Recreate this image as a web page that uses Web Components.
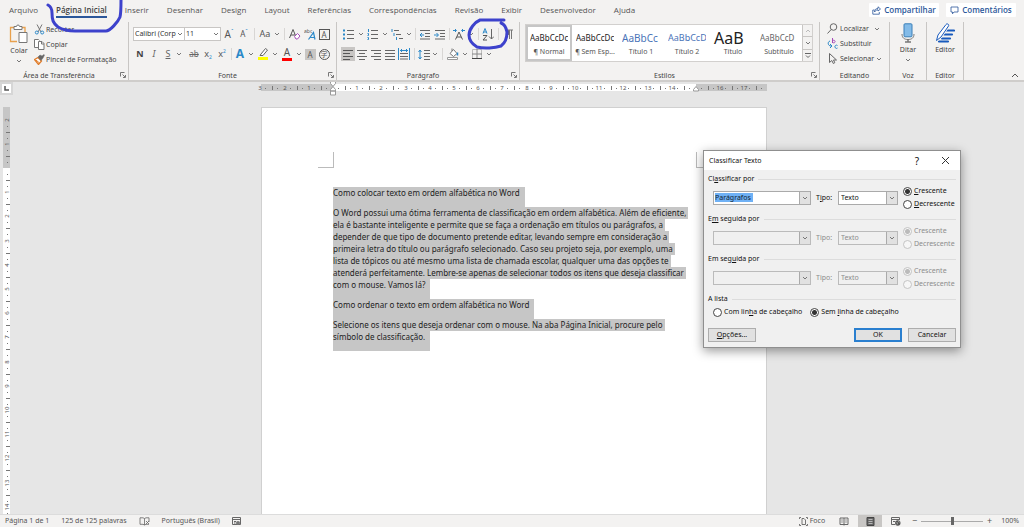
<!DOCTYPE html>
<html lang="pt-BR">
<head>
<meta charset="utf-8">
<title>Documento - Word</title>
<style>
html, body { margin: 0; height: 100%; overflow: hidden; }
body { font-family: "Noto Sans", "Open Sans", sans-serif; font-size: 7px; color: #444; background: #e6e6e6; }
</style>
</head>
<body>
<word-app></word-app>
<script>
const define = (name, html, setup) => {
  const t = document.createElement('template');
  t.innerHTML = html;
  customElements.define(name, class extends HTMLElement {
    connectedCallback() {
      if (this.shadowRoot) return;
      const root = this.attachShadow({ mode: 'open' });
      root.append(t.content.cloneNode(true));
      if (setup) setup(this, root);
    }
  });
};
const reset = `*{box-sizing:border-box} button{font:inherit;color:inherit;background:none;border:0;padding:0;margin:0;cursor:pointer}
input,select{font:inherit;color:inherit;margin:0}`;

/* ---------- icons ---------- */
const lines = (list, c = '#666') => list.map(([x1, x2, y]) => `<path d="M${x1} ${y}H${x2}" stroke="${c}"/>`).join('');
const icons = {
  chev: [6, 6, '<path d="M1 2l2 2 2-2" stroke="#777"/>'],
  chevup: [8, 6, '<path d="M1 5l3-3 3 3" stroke="#555"/>'],
  launch: [6, 6, '<path d="M.5 4.500V.5h4M2.500 2.500l2.500 2.500M5.500 3v2.500H3" stroke="#777"/>'],
  paste: [20, 20, '<path d="M8 17.500H1.500v-14H5M13 3.500h3V8" stroke="#e8a04c" stroke-width="1.300"/><path d="M5 5.500V2.500h2.500a1.500 1.500 0 0 1 3 0H13v3z" stroke="#777" fill="#fff"/><path d="M10 8.500h8v10h-8z" fill="#fff" stroke="#777"/>'],
  cut: [11, 11, '<path d="M3 .5l4 7.500M8 .5L4 8" stroke="#777"/><circle cx="2.800" cy="8.500" r="1.500" stroke="#2b88c8"/><circle cx="8.200" cy="8.500" r="1.500" stroke="#2b88c8"/>'],
  copy: [11, 11, '<path d="M4 8.500H.5v-8h4l1 1M4.500 2.500h3.500l2 2v6h-5.500z" fill="#fff" stroke="#777"/><path d="M7.500 2.500v2.500h2.500" stroke="#777"/>'],
  brush: [11, 11, '<path d="M.5 5.500l3.500-2 3.500 3.500-3 3.500z" fill="#fff" stroke="#e07b28" stroke-width="1.300"/><path d="M2 6l3.500 3" stroke="#e07b28"/><path d="M4 3l2-2 2 1 2-1.500.5.5-1.500 3-2 2.500z" fill="#666" stroke="#666" stroke-width=".5"/>'],
  bullets: [12, 11, lines([[4,11,1.5],[4,11,5.5],[4,11,9.5]]) + '<path d="M0 1.500h2M0 5.500h2M0 9.500h2" stroke="#2b88c8" stroke-width="2"/>'],
  numbers: [12, 11, lines([[4,11,1.5],[4,11,5.5],[4,11,9.5]]) + '<path d="M1.500 0v3M.5 4.500h1v2h-1M.5 8.500h1v2h-1" stroke="#2b88c8"/>'],
  multi: [12, 11, lines([[3,8,1.5],[5,10,5.5],[8,12,9.5]]) + '<path d="M1 0v3M3 4v3M5.500 8v3" stroke="#2b88c8"/>'],
  outdent: [12, 11, lines([[1,11,1.5],[6,11,4.5],[6,11,7.5],[1,11,10]]) + '<path d="M5 6H1M3 4L1 6l2 2" stroke="#2b88c8"/>'],
  indent: [12, 11, lines([[1,11,1.5],[6,11,4.5],[6,11,7.5],[1,11,10]]) + '<path d="M0 6h4M2.500 4l2 2-2 2" stroke="#2b88c8"/>'],
  asian: [12, 11, '<path d="M2.500 10.500L6 3l3.500 7.500M4 8h4" stroke="#555"/><path d="M0 1.500h3M2 0l1.500 1.500L2 3M12 1.500H9M10 0L8.500 1.500 10 3" stroke="#2b88c8"/>'],
  sort: [12, 13, '<path d="M1 5.500L3 .5l2 5M1.500 4h3" stroke="#2b88c8"/><path d="M1 7.500h4L1 12h4" stroke="#555"/><path d="M9.500 1v10M7 8.500l2.500 2.500L12 8.500" stroke="#666"/>'],
  pilcrow: [8, 11, '<path d="M4 1a2.500 2.500 0 0 0 0 5z" fill="#666"/><path d="M2.500 1H8M4.500 1v9M6.500 1v9" stroke="#777"/>'],
  left: [12, 11, lines([[1,11,1.5],[1,8,4.5],[1,11,7.5],[1,8,10.5]], '#555')],
  center: [12, 11, lines([[1,11,1.5],[3,9,4.5],[1,11,7.5],[3,9,10.5]])],
  right: [12, 11, lines([[1,11,1.5],[4,11,4.5],[1,11,7.5],[4,11,10.5]])],
  justify: [12, 11, lines([[1,11,1.5],[1,11,4.5],[1,11,7.5],[1,11,10.5]])],
  distribute: [12, 12, lines([[2,10,5.5],[2,10,8.5],[2,10,11]]) + '<path d="M.5 0v12M11.500 0v12M2 2.500h8M4 1L2.500 2.500 4 4M8 1l1.500 1.500L8 4" stroke="#2b88c8"/>'],
  spacing: [12, 11, lines([[6,12,1.5],[6,12,4.5],[6,12,7.5],[6,12,10.5]]) + '<path d="M2 1v9M.5 3L2 1l1.500 2M.5 8L2 10l1.500-2" stroke="#2b88c8"/>'],
  fill: [12, 12, '<path d="M3 5.500l3.500-4 3.500 4-3.500 3zM5 3V.5" stroke="#777" fill="#fff"/><path d="M10.500 4.500v3" stroke="#2b88c8" stroke-width="1.500"/><path d="M.5 9.500h10v2H.5z" stroke="#999" fill="#fff"/>'],
  borders: [12, 12, '<path d="M1.500 1.500h9v9h-9z" stroke="#bbb"/><path d="M6 1v10M1 6h10" stroke="#888"/><path d="M1 10.500h10" stroke="#444"/>'],
  search: [11, 11, '<circle cx="6.500" cy="4" r="3.300" stroke="#666"/><path d="M4.200 6.500L.5 10.500" stroke="#666"/>'],
  pointer: [11, 11, '<path d="M2.500.5v9l2.300-2 1.500 3 1.500-.8L6.500 7h3z" stroke="#666"/>'],
  mic: [14, 20, '<path d="M1 11c0 4 2.500 5.500 6 5.500s6-1.500 6-5.500" stroke="#777"/><path d="M7 16v3M4 19h6" stroke="#777" stroke-width="1.500"/><rect x="3" y=".8" width="8" height="13" rx="1" fill="#83bbe8" stroke="#3a7fb8"/>'],
  editor: [20, 20, '<path d="M11 7.500h8M9 11.500h8M7 15.500h8M4 18.500h9" stroke="#185abd" stroke-width="2.200" stroke-linecap="round"/><path d="M1.500 17.500L3 12 11 1.500c1-1.500 3.500 0 2.500 1.500L6 14z" fill="#f3f2f1" stroke="#f3f2f1" stroke-width="2.500"/><path d="M1.500 17.500L3 12 11 1.500c1-1.500 3.500 0 2.500 1.500L6 14z" fill="#fff" stroke="#185abd"/>'],
  share: [9, 9, '<path d="M2.500 4H.8v4.200h6.500V6" stroke="#2b579a" stroke-width=".8"/><path d="M2.500 6c0-2.500 1.500-3.500 3.500-3.500V.8L8.500 3 6 5V3.800C4.500 3.800 3.500 4.500 2.500 6z" stroke="#2b579a" stroke-width=".8"/>'],
  comment: [9, 9, '<path d="M1 1h7v5H4L2.500 7.800V6H1z" stroke="#2b579a" stroke-width=".8"/>'],
  book: [11, 9, '<path d="M5.500 8V1.500L4 .8H1v6.500h3zM5.500 8L7 7.300h3M10 5V.8H7l-1.500.7M7 4l3 3M10 4L7 7" stroke="#666" stroke-width=".8"/>'],
  macro: [9, 9, '<path d="M.5.5h8v7h-8z" stroke="#666"/><path d="M.5 2.500h8M2 4.500h2M2 6h1.500" stroke="#666"/><circle cx="6" cy="6" r="2" fill="#777"/>'],
  focus: [9, 9, '<path d="M.5 2V.5H2M7 .5h1.500V2M.5 7v1.500H2M8.500 7v1.500H7M3 1.500h2l1.500 1.500v4.500H3z" stroke="#555" stroke-width=".8"/>'],
  read: [10, 9, '<path d="M5 8.500V1H1v6.500h8V1H5" stroke="#666"/><path d="M2 3h2M2 5h2M6 3h2M6 5h2" stroke="#999"/>'],
  print: [9, 9, '<path d="M1 .5h7v8H1z" fill="#666" stroke="#444"/><path d="M2.500 2.500h4M2.500 4.500h4M2.500 6.500h4" stroke="#ccc" stroke-width=".8"/>'],
  web: [10, 9, '<path d="M4 7.500H.5v-7h8V3M.5 2.500h8M2 4.500h2" stroke="#666"/><circle cx="6.800" cy="6" r="2.700" fill="#555"/><path d="M5.500 5l1 1-.5 1.500M7.500 4l.8 1.500" stroke="#ddd" stroke-width=".6"/>'],
  close: [9, 9, '<path d="M1 1l7 7M8 1L1 8" stroke="#333"/>']
};
define('ui-icon', `<style>:host{display:inline-flex;flex:none}svg{display:block}</style><svg aria-hidden="true" fill="none"></svg>`, (h, r) => {
  const [w, ht, body] = icons[h.getAttribute('name')];
  const s = r.querySelector('svg');
  s.setAttribute('width', w); s.setAttribute('height', ht); s.setAttribute('viewBox', `0 0 ${w} ${ht}`);
  s.innerHTML = body;
});

/* ---------- ribbon parts ---------- */
define('tool-button', `<style>${reset}
:host{display:block;width:14px;height:14px;flex:none;color:#555;font-size:10px}
:host([wide]){width:16px}:host([drop]){width:8px}
button{width:100%;height:100%;display:flex;align-items:center;justify-content:center;line-height:14px;white-space:nowrap}
:host([on]) button{background:#c8c6c4}</style><button type="button"><slot></slot></button>`, (h, r) => {
  r.querySelector('button').setAttribute('aria-label', h.getAttribute('label') || 'Mais opções');
});
define('tool-sep', `<style>:host{display:block;width:6px;height:12px;flex:none;background:linear-gradient(#d8d6d4,#d8d6d4) center/1px 100% no-repeat}:host([slim]){width:4px}</style>`);
define('ribbon-group', `<style>${reset}
:host{display:flex;flex-direction:column;flex:none;border-right:1px solid #c8c6c4;height:58px}
.body{flex:1;min-height:0}
footer{position:relative;height:9px;line-height:9px;display:flex;justify-content:center;padding-right:10px}
.go{position:absolute;right:2px;top:1px;line-height:0}
:host([plain]) footer{padding:0}
:host([plain]) .go{display:none}
</style><div class="body"><slot></slot></div><footer><span></span><button class="go" aria-label="Abrir caixa de diálogo"><ui-icon name="launch"></ui-icon></button></footer>`, (h, r) => {
  r.querySelector('span').textContent = h.getAttribute('label');
});
define('clipboard-tools', `<style>${reset}
:host{display:flex;padding:2px 0 0 8px;gap:4px}
.paste{display:flex;flex-direction:column;align-items:center;width:22px;line-height:14px;font-size:7px}
.list{display:flex;flex-direction:column;gap:4px;align-items:flex-start}
.list button{display:flex;gap:1px;align-items:center;height:11px;line-height:11px;white-space:nowrap}
</style><button class="paste"><ui-icon name="paste"></ui-icon><span>Colar</span><ui-icon name="chev"></ui-icon></button>
<div class="list"><button><ui-icon name="cut"></ui-icon>Recortar</button><button><ui-icon name="copy"></ui-icon>Copiar</button><button><ui-icon name="brush"></ui-icon>Pincel de Formatação</button></div>`);
define('font-tools', `<style>${reset}
:host{display:flex;flex-direction:column;gap:6px;padding:5px 5px 0 4px}
.row{display:flex;align-items:center;height:14px}
.combo{position:relative;display:block;height:14px;border:1px solid #c8c6c4;background:#fff}
.combo+.combo{border-left:0}
.combo ui-icon{position:absolute;right:1px;top:3px;pointer-events:none}
select{appearance:none;width:100%;height:12px;border:0;background:none;padding:0 8px 0 1px;line-height:12px;font-size:7px;color:#333;overflow:hidden;text-overflow:clip}
.name{width:55px}.size{width:38px}
.s{width:4px;flex:none}
b,i,u,s{font-size:9px;color:#444}
i,u,s{color:#666}
.up{align-self:flex-start;font-size:6px;color:#2b88c8;line-height:8px}
.down{align-self:flex-end;color:#2b88c8;line-height:8px;font-size:5px}
.blue{font-weight:700;font-size:12px;color:#2b88c8}
.mark{border-bottom:3px solid #ff0;line-height:9px;width:10px;height:13px;text-align:center}
.red{border-color:#f00}
.box{border:1px solid #555;width:11px;height:11px;line-height:9px;font-size:8px;text-align:center}
.shade{background:#c8c6c4;width:11px;height:11px;line-height:11px;font-size:8px;text-align:center}
.ring{border-radius:50%;font-family:"Noto Sans CJK JP",sans-serif;font-size:7px}
</style>
<div class="row"><label class="combo name"><select aria-label="Fonte"><option>Calibri (Corp</option></select><ui-icon name="chev"></ui-icon></label><label class="combo size"><select aria-label="Tamanho da fonte"><option>11</option></select><ui-icon name="chev"></ui-icon></label>
<tool-button wide label="Aumentar fonte">A<span class="up">ˆ</span></tool-button><tool-button label="Diminuir fonte"><span style="font-size:8px">A</span><span class="up">ˇ</span></tool-button>
<tool-sep></tool-sep><tool-button wide label="Maiúsculas e minúsculas"><span style="font-size:9px">Aa</span></tool-button><tool-button drop><ui-icon name="chev"></ui-icon></tool-button><tool-sep></tool-sep>
<tool-button wide label="Limpar formatação"><svg width="12" height="12" fill="none"><path d="M.5 10L4 1.500 7.500 10M2 7h4" stroke="#555"/><path d="M5.500 8.500l3-3 2.500 2.500-2.500 3H7z" fill="#fff" stroke="#a64dba"/></svg></tool-button><tool-button label="Guia fonético"><svg width="12" height="12" fill="none"><text x="0" y="5" font-size="5" fill="#555">abc</text><path d="M4.500 11.500l5-7 1.500 7M6.500 9.500H11" stroke="#2b88c8" stroke-width="1.200"/></svg></tool-button><tool-button label="Borda de caractere"><span class="box">A</span></tool-button></div>
<div class="row"><tool-button label="Negrito"><b>N</b></tool-button><tool-button label="Itálico"><i>I</i></tool-button><tool-button label="Sublinhado"><u>S</u></tool-button><tool-button drop><ui-icon name="chev"></ui-icon></tool-button><span class="s"></span><tool-button label="Tachado"><s style="font-size:8px">ab</s></tool-button><tool-button label="Subscrito"><span style="font-size:9px">x</span><span class="down">2</span></tool-button><tool-button label="Sobrescrito"><span style="font-size:9px">x</span><span class="up" style="font-size:5px">2</span></tool-button><tool-sep slim></tool-sep>
<tool-button label="Efeitos de texto"><span class="blue">A</span></tool-button><tool-button drop><ui-icon name="chev"></ui-icon></tool-button><tool-button wide label="Realce"><svg width="11" height="12" fill="none"><path d="M0 10.500h10" stroke="#ff0" stroke-width="3"/><path d="M3 6l4.500-5.500 2 1.500L5 7.500H2z" stroke="#666" fill="#fff"/></svg></tool-button><tool-button drop><ui-icon name="chev"></ui-icon></tool-button>
<tool-button wide label="Cor da fonte"><span class="mark red">A</span></tool-button><tool-button drop><ui-icon name="chev"></ui-icon></tool-button><tool-button label="Sombreamento de caractere"><span class="shade">A</span></tool-button><tool-button label="Circundar caracteres"><span class="box ring">字</span></tool-button></div>`);
const tb = (n, label, a = '') => `<tool-button ${a} label="${label}"><ui-icon name="${n}"></ui-icon></tool-button>`;
const dd = '<tool-button drop><ui-icon name="chev"></ui-icon></tool-button>';
define('paragraph-tools', `<style>${reset}:host{display:flex;flex-direction:column;gap:6px;padding:5px 3px 0 4px}.row{display:flex;align-items:center;height:14px}</style>
<div class="row">${tb('bullets','Marcadores','wide')}${dd}${tb('numbers','Numeração','wide')}${dd}${tb('multi','Lista de vários níveis','wide')}${dd}<tool-sep slim></tool-sep>${tb('outdent','Diminuir recuo','wide')}${tb('indent','Aumentar recuo')}<tool-sep slim></tool-sep>${tb('asian','Layout asiático','wide')}${dd}<tool-sep></tool-sep>${tb('sort','Classificar')}<tool-sep></tool-sep>${tb('pilcrow','Mostrar tudo','wide')}</div>
<div class="row">${tb('left','Alinhar à esquerda','on')}${tb('center','Centralizar')}${tb('right','Alinhar à direita')}${tb('justify','Justificar')}${tb('distribute','Distribuir')}<tool-sep></tool-sep>${tb('spacing','Espaçamento')}${dd}<tool-sep></tool-sep>${tb('fill','Sombreamento','wide')}${dd}${tb('borders','Bordas','wide')}${dd}</div>`);
define('style-card', `<style>${reset}:host{display:block;width:46px;flex:none}
button{display:flex;flex-direction:column;align-items:center;width:100%;height:36px;padding:4px 3px 0}
:host([on]) button{border:2px solid #c6c6c6;padding:2px 1px 0}
.p{width:38px;height:18px;line-height:18px;overflow:hidden;text-align:left;white-space:nowrap;font-size:8px;color:#222}
.h1{font-size:10px;color:#4a73b8}.h2{font-size:9px;color:#4a73b8}.t{font-size:16px;overflow:visible}.sub{color:#666}
.l{line-height:10px;color:#555;white-space:nowrap}</style><button><span class="p"></span><span class="l"><slot></slot></span></button>`, (h, r) => {
  const p = r.querySelector('.p'); p.textContent = h.getAttribute('sample'); if (h.getAttribute('kind')) p.classList.add(h.getAttribute('kind'));
});
define('style-gallery', `<style>${reset}:host{display:flex;margin:2px 6px 0 5px;border:1px solid #d2d0ce;background:#fff;height:38px}
.side{display:flex;flex-direction:column;width:10px;margin-left:auto}.side button{flex:1;border-left:1px solid #c8c6c4;border-bottom:1px solid #c8c6c4;background:#f3f2f1;line-height:0}.side button:last-child{border-bottom:0}
</style><style-card on sample="AaBbCcDc">¶ Normal</style-card><style-card sample="AaBbCcDc">¶ Sem Esp...</style-card><style-card kind="h1" sample="AaBbCc">Título 1</style-card><style-card kind="h2" sample="AaBbCcD">Título 2</style-card><style-card kind="t" sample="AaB">Título</style-card><style-card kind="sub" sample="AaBbCcD">Subtítulo</style-card>
<div class="side"><button aria-label="Acima"><svg width="6" height="5" fill="none"><path d="M1 4l2-2 2 2" stroke="#bbb"/></svg></button><button aria-label="Abaixo"><ui-icon name="chev"></ui-icon></button><button aria-label="Mais"><svg width="6" height="7" fill="none"><path d="M0 1.500h6M1 3.500l2 2 2-2" stroke="#666"/></svg></button></div>`);
define('edit-tools', `<style>${reset}:host{display:flex;flex-direction:column;gap:4px;padding:1px 0 0 7px}
button{display:flex;align-items:center;align-self:flex-start;gap:2px;height:11px;line-height:11px;white-space:nowrap}
.c{margin-left:3px}
.swap{width:11px;height:11px}</style>
<button><ui-icon name="search"></ui-icon>Localizar<ui-icon class="c" name="chev"></ui-icon></button>
<button><svg class="swap" fill="none"><path d="M5.500 0v5M5.500 3.500a1.300 1.300 0 1 1 0 .1" stroke="#a64dba"/><path d="M10.500 7.500a1.600 1.600 0 1 0 0 2.500M3 3C0 4 1 8 4 8M3 6l2 2-2 2" stroke="#2b88c8"/></svg>Substituir</button>
<button><ui-icon name="pointer"></ui-icon>Selecionar<ui-icon name="chev"></ui-icon></button>`);
define('big-button', `<style>${reset}:host{display:block}button{display:flex;flex-direction:column;align-items:center;width:100%;padding-top:1px;font-size:7px;line-height:14px}:host([nodrop]) .d{display:none}</style><button><slot name="icon"></slot><span><slot></slot></span><ui-icon class="d" name="chev"></ui-icon></button>`);
define('tab-bar', `<style>${reset}
:host{display:flex;height:20px;align-items:center;justify-content:space-between;padding:0 8px 0 9px;font-size:8px;color:#555;font-family:"Open Sans",sans-serif}
nav{display:flex;gap:18px;white-space:nowrap}
a{color:inherit;text-decoration:none;line-height:13px;padding-top:1px;border-bottom:2px solid transparent}
a[aria-current]{font-weight:600;border-color:#2b579a;color:#444}
div{display:flex;gap:7px}
button{display:flex;align-items:center;justify-content:center;gap:3px;background:#fff;border-radius:1px;color:#2b579a;font-weight:600;height:14px;width:70px;line-height:14px}
</style><nav></nav><div><button><ui-icon name="share"></ui-icon>Compartilhar</button><button><ui-icon name="comment"></ui-icon>Comentários</button></div>`, (h, r) => {
  r.querySelector('nav').innerHTML = ['Arquivo','Página Inicial','Inserir','Desenhar','Design','Layout','Referências','Correspondências','Revisão','Exibir','Desenvolvedor','Ajuda'].map((t, i) => `<a href="#"${i === 1 ? ' aria-current="page"' : ''}>${t}</a>`).join('');
});
define('word-ribbon', `<style>${reset}
:host{display:block;background:#f3f2f1;border-bottom:2px solid #cfcdcb;height:82px}
.groups{display:flex;align-items:flex-start;padding-top:2px}
.clip{width:129px}.font{width:208px}.para{width:183px}.styles{width:300px}.edit{width:70px}.one{width:37px}
.collapse{margin-left:auto;padding:50px 5px 0 0;line-height:0}
</style><tab-bar></tab-bar><div class="groups">
<ribbon-group class="clip" label="Área de Transferência"><clipboard-tools></clipboard-tools></ribbon-group>
<ribbon-group class="font" label="Fonte"><font-tools></font-tools></ribbon-group>
<ribbon-group class="para" label="Parágrafo"><paragraph-tools></paragraph-tools></ribbon-group>
<ribbon-group class="styles" label="Estilos"><style-gallery></style-gallery></ribbon-group>
<ribbon-group plain class="edit" label="Editando"><edit-tools></edit-tools></ribbon-group>
<ribbon-group plain class="one" label="Voz"><big-button><ui-icon slot="icon" name="mic"></ui-icon>Ditar</big-button></ribbon-group>
<ribbon-group plain class="one" label="Editor"><big-button nodrop><ui-icon slot="icon" name="editor"></ui-icon>Editor</big-button></ribbon-group>
<button class="collapse" aria-label="Recolher faixa"><ui-icon name="chevup"></ui-icon></button></div>`);

/* ---------- rulers: one centimetre is 24.2 units ---------- */
const CM = 24.2;
const ticks = (from, to, zero, skip) => {
  let s = '';
  for (let n = from; n <= to; n++) {
    const x = zero + n * CM, r = v => Math.round(v);
    if (n !== 0 && n !== skip) s += `<text x="${r(x)}" y="6" font-size="6" text-anchor="middle" fill="#555">${Math.abs(n)}</text>`;
    s += `<path d="M${r(x + 5)} 4.500h1M${r(x + 17)} 4.500h1M${r(x + 12)}.5 2v4" stroke="#777"/>`;
  }
  return s;
};
define('page-ruler', `<style>:host{display:block;height:17px;width:506px}svg{display:block;overflow:visible}</style><svg width="506" height="17" fill="none"><path d="M0 0h506v7H0z" fill="#c6c6c6"/><path d="M72 0h363v7H72z" fill="#fff"/><g class="t"></g>
<path d="M69.500-2.500h5v2L72 2.500l-2.500-3zM69.500 7V5.500L72 2.500l2.500 3V7zM69.500 7h5v4h-5z" fill="#fff" stroke="#999"/><path d="M432.500 7V5.500l2.500-3 2.500 3V7z" fill="#fff" stroke="#999"/></svg>`, (h, r) => {
  r.querySelector('.t').innerHTML = ticks(-3, 17, 72, 15);
});
define('side-ruler', `<style>:host{display:block;width:7px;overflow:hidden;background:#fff;min-height:0}svg{display:block}</style><svg width="7" height="407" fill="none"><path d="M0 0h7v61H0z" fill="#c6c6c6"/><g></g></svg>`, (h, r) => {
  let s = '';
  for (let n = -2; n <= 14; n++) {
    const y = Math.round(61 + n * CM);
    if (n !== 0) s += `<text transform="translate(6 ${y}) rotate(-90)" font-size="6" text-anchor="middle" fill="#555">${Math.abs(n)}</text>`;
    s += `<path d="M4 ${y + 6}.5h1M4 ${y + 18}.5h1M3 ${y + 12}.5h4" stroke="#777"/>`;
  }
  r.querySelector('g').innerHTML = s;
});

/* ---------- document ---------- */
define('doc-page', `<style>${reset}
:host{display:block;width:506px;background:#fff;border:1px solid #d0d0d0;border-bottom:0;padding:79px 60px 0 71px;font-family:"Noto Sans",sans-serif;font-size:8px;line-height:12px;color:#222;position:relative}
p{margin:0;white-space:nowrap}
span{display:block;width:fit-content;background:#c6c6c6;padding-right:2px}
span:last-child{padding:0 5px 8px 0}
i{position:absolute;top:44px;width:16px;height:16px;border-bottom:1px solid #bbb}
.a{left:56px;border-right:1px solid #bbb}.b{left:434px;border-left:1px solid #bbb}
</style><i class="a"></i><i class="b"></i><article></article>`, (h, r) => {
  r.querySelector('article').innerHTML = [
    ['Como colocar texto em ordem alfabética no Word'],
    ['O Word possui uma ótima ferramenta de classificação em ordem alfabética. Além de eficiente,','ela é bastante inteligente e permite que se faça a ordenação em títulos ou parágrafos, a','depender de que tipo de documento pretende editar, levando sempre em consideração a','primeira letra do título ou parágrafo selecionado. Caso seu projeto seja, por exemplo, uma','lista de tópicos ou até mesmo uma lista de chamada escolar, qualquer uma das opções te','atenderá perfeitamente. Lembre-se apenas de selecionar todos os itens que deseja classificar','com o mouse. Vamos lá?'],
    ['Como ordenar o texto em ordem alfabética no Word'],
    ['Selecione os itens que deseja ordenar com o mouse. Na aba Página Inicial, procure pelo','símbolo de classificação.']
  ].map(p => `<p>${p.map(l => `<span>${l} </span>`).join('')}</p>`).join('');
});

/* ---------- dialog ---------- */
const legendCss = `.lg{display:flex;align-items:center;gap:4px;line-height:10px}.lg:after{content:"";flex:1;height:1px;background:#dcdcdc}
label{white-space:nowrap}
input[type=radio]{appearance:none;width:9px;height:9px;border:1px solid #444;border-radius:50%;background:#fff;flex:none}
input[type=radio]:checked{background:radial-gradient(#333 0 2px,#fff 3px)}
.r{display:flex;align-items:center;gap:2px;line-height:10px}`;
define('sort-key', `<style>${reset}${legendCss}
:host{display:block;color:#111;height:40px}
.line{display:grid;grid-template-columns:98px 17px 60px 1fr;column-gap:5px;align-items:center;padding-left:5px;margin-top:2px}
.box{position:relative;display:flex;align-items:center;border:1px solid #aaa;background:#fff;height:14px}
.box input{border:0;padding:0;width:38px;margin-left:1px;height:9px;line-height:9px;background:#6fb1f5;color:#123}
.box select{appearance:none;border:0;background:none;width:100%;height:12px;line-height:12px;padding:0 2px}
.arrow{position:absolute;right:0;top:0;width:11px;height:12px;display:grid;place-items:center;background:#e1e1e1;border-left:1px solid #aaa;pointer-events:none}
.radios{display:flex;flex-direction:column;gap:3px}
:host([off]) .line{color:#8c8c8c}
:host([off]) .box{background:#f0f0f0;border-color:#bbb}
:host([off]) .box input{background:none;width:80px}
:host([off]) select,:host([off]) input{opacity:1;color:#8c8c8c}
:host([off]) input[type=radio]{border-color:#c4c4c4;background:#f6f6f6}
:host([off]) input[type=radio]:checked{background:radial-gradient(#bbb 0 2px,#f6f6f6 3px)}
</style><div class="lg"><span><slot></slot></span></div><div class="line">
<div class="box"><input type="text" aria-label="Campo"><span class="arrow"><ui-icon name="chev"></ui-icon></span></div>
<label for="t" class="tl">Tipo:</label><div class="box"><select id="t"><option>Texto</option></select><span class="arrow"><ui-icon name="chev"></ui-icon></span></div>
<div class="radios"><label class="r"><input type="radio" name="o" checked><span class="c">Crescente</span></label><label class="r"><input type="radio" name="o"><span class="d">Decrescente</span></label></div></div>`, (h, r) => {
  if (h.hasAttribute('off')) r.querySelectorAll('input,select').forEach(e => e.disabled = true);
  else {
    r.querySelector('.box input').value = 'Parágrafos';
    r.querySelector('.tl').innerHTML = 'T<u>i</u>po:';
    r.querySelector('.c').innerHTML = '<u>C</u>rescente';
    r.querySelector('.d').innerHTML = '<u>D</u>ecrescente';
  }
});
define('sort-dialog', `<style>${reset}${legendCss}
:host{display:block;width:258px;border:1px solid #8f8f8f;background:#f0f0f0;box-shadow:0 3px 10px rgba(0,0,0,.4);color:#111}
header{display:flex;align-items:center;background:#fff;height:19px;padding:0 10px 0 5px}
h2{font:inherit;margin:0 auto 0 0}
header button{line-height:0}
.q{font-size:10px;line-height:12px;margin-right:22px}
main{padding:4px 4px 5px}
.head{display:flex;gap:8px;padding:3px 0 0 5px}
.btns{display:flex;gap:6px;margin-top:11px}
.btns button{width:48px;height:14px;border:1px solid #adadad;background:#e1e1e1;line-height:12px}
.btns .ok{border:2px solid #2a7fcf;line-height:10px;margin-left:auto}
</style><header><h2>Classificar Texto</h2><button class="q" aria-label="Ajuda">?</button><button aria-label="Fechar"><ui-icon name="close"></ui-icon></button></header>
<main><sort-key>Cl<u>a</u>ssificar por</sort-key><sort-key off>E<u>m</u> seguida por</sort-key><sort-key off>Em seg<u>u</u>ida por</sort-key>
<div class="lg"><span>A lista</span></div><div class="head"><label class="r"><input type="radio" name="h"><span>Com lin<u>h</u>a de cabeçalho</span></label><label class="r"><input type="radio" name="h" checked><span>Sem <u>l</u>inha de cabeçalho</span></label></div>
<div class="btns"><button><u>O</u>pções...</button><button class="ok">OK</button><button>Cancelar</button></div></main>`);

define('status-bar', `<style>${reset}
:host{display:flex;align-items:center;height:13px;flex:none;background:#f3f2f1;border-top:1px solid #dcdcdc;padding:0 5px;color:#555;line-height:12px;white-space:nowrap;gap:12px}
.end{margin-left:auto;display:flex;align-items:center;gap:2px}
.end button{display:flex;align-items:center;justify-content:center;width:24px;height:12px;gap:2px}
.end .f{width:auto;margin-right:5px}.end .on{background:#c8c6c4}.end .z{width:9px;font-size:9px}
input{appearance:none;width:62px;height:9px;background:linear-gradient(#aaa,#aaa) center/100% 1px no-repeat}
input::-webkit-slider-thumb{appearance:none;width:3px;height:8px;background:#666}
output{margin-left:5px}
</style><span>Página 1 de 1</span><span>125 de 125 palavras</span><ui-icon name="book"></ui-icon><span>Português (Brasil)</span><ui-icon name="macro"></ui-icon>
<div class="end"><button class="f"><ui-icon name="focus"></ui-icon>Foco</button><button aria-label="Modo de leitura"><ui-icon name="read"></ui-icon></button><button class="on" aria-label="Layout de impressão"><ui-icon name="print"></ui-icon></button><button aria-label="Layout da Web"><ui-icon name="web"></ui-icon></button><button class="z" aria-label="Reduzir">−</button><input type="range" aria-label="Zoom" min="0" max="100" value="50"><button class="z" aria-label="Ampliar">+</button><output>100%</output></div>`);

/* freehand pen marks over the ribbon */
define('pen-marks', `<style>:host{position:absolute;left:0;top:0;pointer-events:none}svg{display:block}</style><svg width="520" height="56" fill="none" stroke="#3d42cc" stroke-width="3" stroke-linecap="round" stroke-linejoin="round"><path d="M48 5q4 2 4 8c0 7 1 10 6 14 5 3 9 4 17 4h31c4 0 12-9 14-14 1-4 1-12 1-17"/><path d="M504 20h-24c-5 2-11 9-11 15 0 5 3 9 8 12 7 2 18 1 24-1 4-3 6-8 6-14-1-5-3-8-6-9"/></svg>`);

define('word-app', `<style>${reset}
:host{display:flex;flex-direction:column;height:100vh;position:relative}
.work{flex:1;min-height:0;display:grid;grid-template-columns:14px 1fr;grid-template-rows:25px 1fr;position:relative;overflow:hidden}
.corner{width:13px;height:13px;border:2px solid #d6d6d6;background:#fff;display:grid;place-items:center}
.corner svg{display:block}
.top{display:flex;justify-content:center;padding:2px 10px 0 0}
side-ruler{margin-left:3px}
.canvas{display:flex;justify-content:center;padding-right:10px;overflow:hidden}
sort-dialog{position:absolute;right:63px;top:68px}
</style><word-ribbon></word-ribbon><div class="work"><div class="corner"><svg width="5" height="5"><path d="M1 0v4h4" stroke="#555" stroke-width="1.500" fill="none"/></svg></div><div class="top"><page-ruler></page-ruler></div><side-ruler></side-ruler><div class="canvas"><doc-page></doc-page></div><sort-dialog></sort-dialog></div><status-bar></status-bar><pen-marks></pen-marks>`);
</script>
</body>
</html>
